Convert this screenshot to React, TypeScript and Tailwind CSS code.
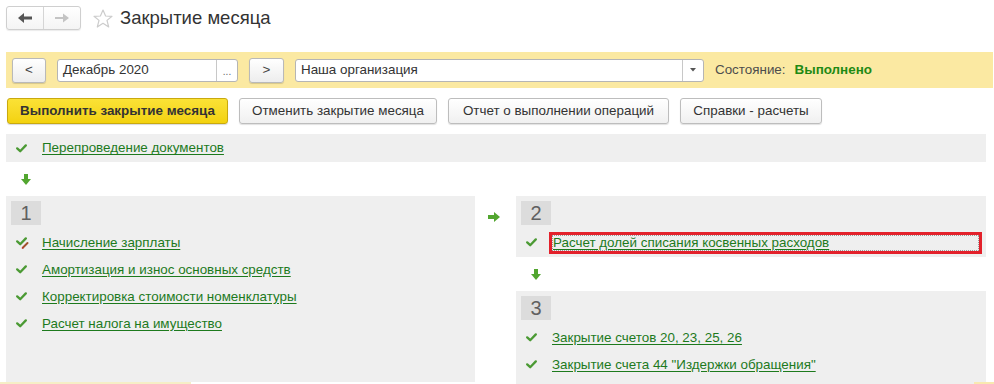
import React from "react";

const LINK = "text-[#1d7a1d] underline underline-offset-[2px] decoration-[#1d7a1d]";
const FS = "text-[13.4px]";

function Check() {
  return (
    <svg width="11" height="9" viewBox="0 0 11 9" className="shrink-0">
      <path d="M1.2 4.4 L4.2 7.2 L9.8 1.4" fill="none" stroke="#4b9a34" strokeWidth="2.3" strokeLinecap="round" strokeLinejoin="round" />
    </svg>
  );
}

function CheckEdit() {
  return (
    <svg width="13" height="12" viewBox="0 0 13 12" className="shrink-0">
      <path d="M1.2 4.4 L4.2 7.2 L9.8 1.4" fill="none" stroke="#4b9a34" strokeWidth="2.3" strokeLinecap="round" strokeLinejoin="round" />
      <path d="M7 10.5 L11.5 6" stroke="#a0522d" strokeWidth="2" strokeLinecap="round" />
      <circle cx="6.6" cy="10.9" r="0.9" fill="#c0392b" />
    </svg>
  );
}

function ArrowDown() {
  return (
    <svg width="10" height="11" viewBox="0 0 10 11">
      <rect x="3" y="0" width="4" height="5.5" fill="#52a62f" />
      <polygon points="0,5 10,5 5,11" fill="#52a62f" />
    </svg>
  );
}

function ArrowRight() {
  return (
    <svg width="12" height="10" viewBox="0 0 12 10">
      <rect x="0" y="3" width="6.5" height="4" fill="#52a62f" />
      <polygon points="6,0 6,10 12,5" fill="#52a62f" />
    </svg>
  );
}

function Item({ text, edit, boxed }: { text: string; edit?: boolean; boxed?: boolean }) {
  return (
    <div className="h-[27px] flex items-center">
      <div className="w-[36px] pl-[10px] flex items-center">{edit ? <CheckEdit /> : <Check />}</div>
      {boxed ? (
        <div className="ml-[-3px] w-[433px] h-[22px] border-[3px] border-[#e3212b] flex items-center">
          <div className="w-full h-full border border-dotted border-[#9a9a9a] flex items-center">
            <span className={`${LINK} ${FS} leading-none`}>{text}</span>
          </div>
        </div>
      ) : (
        <span className={`${LINK} ${FS} leading-none`}>{text}</span>
      )}
    </div>
  );
}

function NumBox({ n }: { n: string }) {
  return (
    <div className="ml-[5px] mt-[5px] w-[30px] h-[24px] bg-[#dcdcdc] flex items-center justify-center text-[20px] text-[#606060] leading-none">
      {n}
    </div>
  );
}

function GrayBtn({ children, w }: { children: React.ReactNode; w: string }) {
  return (
    <div
      className={`${w} h-[26px] flex items-center justify-center rounded-[3px] border border-[#bdbdbd] bg-gradient-to-b from-white to-[#f0f0f0] ${FS} text-[#333] shadow-[0_1px_1px_rgba(0,0,0,0.12)]`}
    >
      {children}
    </div>
  );
}

export default function App() {
  return (
    <div className="relative w-[994px] h-[384px] overflow-hidden bg-white font-['Liberation_Sans',Arial,sans-serif] text-[#333]">
      {/* Header */}
      <div className="flex items-center pt-[6px] pl-[6px] h-[30px]">
        <div className="flex h-[24px] rounded-[3px] border border-[#cfcfcf] shadow-[0_1px_1px_rgba(0,0,0,0.08)] bg-gradient-to-b from-white to-[#f4f4f4]">
          <div className="w-[37px] flex items-center justify-center border-r border-[#d5d5d5]">
            <svg width="14" height="10" viewBox="0 0 14 10">
              <rect x="5" y="3.5" width="9" height="3" fill="#555" />
              <polygon points="0,5 6,0 6,10" fill="#555" />
            </svg>
          </div>
          <div className="w-[36px] flex items-center justify-center">
            <svg width="14" height="10" viewBox="0 0 14 10">
              <rect x="0" y="4" width="9" height="2" fill="#c4c4c4" />
              <polygon points="14,5 8,0.5 8,9.5" fill="#c4c4c4" />
            </svg>
          </div>
        </div>
        <svg width="20" height="19" viewBox="0 0 20 19" className="ml-[12px]">
          <polygon
            points="10,1 12.6,7 19,7.3 14,11.4 15.7,18 10,14.3 4.3,18 6,11.4 1,7.3 7.4,7"
            fill="none"
            stroke="#cccccc"
            strokeWidth="1.2"
            strokeLinejoin="round"
          />
        </svg>
        <div className="ml-[7px] text-[18.5px] text-[#333] leading-none">Закрытие месяца</div>
      </div>

      {/* Yellow toolbar */}
      <div className="mt-[22px] ml-[6px] w-[987px] h-[36px] bg-[#fbe9a2] flex items-center pl-[6px] gap-[11px]">
        <div className={`w-[34px] h-[25px] flex items-center justify-center rounded-[3px] border border-[#b9b9b9] bg-gradient-to-b from-white to-[#ededed] ${FS} text-[#444] shadow-[0_1px_1px_rgba(0,0,0,0.15)]`}>
          &lt;
        </div>
        <div className="w-[181px] h-[23px] flex rounded-[3px] border border-[#b5b5b5] bg-white">
          <div className={`flex-1 flex items-center pl-[5px] ${FS} text-[#333]`}>Декабрь 2020</div>
          <div className="w-[21px] border-l border-[#c8c8c8] flex items-end justify-center pb-[4px] text-[10px] text-[#666] leading-none">...</div>
        </div>
        <div className={`w-[35px] h-[25px] flex items-center justify-center rounded-[3px] border border-[#b9b9b9] bg-gradient-to-b from-white to-[#ededed] ${FS} text-[#444] shadow-[0_1px_1px_rgba(0,0,0,0.15)]`}>
          &gt;
        </div>
        <div className="w-[409px] h-[23px] flex rounded-[3px] border border-[#b5b5b5] bg-white">
          <div className={`flex-1 flex items-center pl-[5px] ${FS} text-[#333]`}>Наша организация</div>
          <div className="w-[21px] border-l border-[#c8c8c8] flex items-center justify-center">
            <svg width="6" height="4" viewBox="0 0 6 4">
              <polygon points="0,0 6,0 3,3.5" fill="#555" />
            </svg>
          </div>
        </div>
        <div className={`flex items-center ${FS}`}>
          <span className="text-[#4d4d4d]">Состояние:</span>
          <span className="ml-[9px] font-bold text-[#1f8a14]">Выполнено</span>
        </div>
      </div>

      {/* Command buttons */}
      <div className="mt-[10px] ml-[7px] flex gap-[11px]">
        <div className={`w-[221px] h-[26px] flex items-center justify-center rounded-[3px] border border-[#c9a90e] bg-gradient-to-b from-[#fbe235] to-[#f3d20c] ${FS} font-bold text-[#333] shadow-[0_1px_1px_rgba(0,0,0,0.15)]`}>
          Выполнить закрытие месяца
        </div>
        <GrayBtn w="w-[198px]">Отменить закрытие месяца</GrayBtn>
        <GrayBtn w="w-[221px]">Отчет о выполнении операций</GrayBtn>
        <GrayBtn w="w-[142px]">Справки - расчеты</GrayBtn>
      </div>

      {/* Reposting band */}
      <div className="mt-[10px] ml-[6px] w-[980px] h-[28px] bg-[#efefef] flex items-center">
        <div className="w-[36px] pl-[10px] flex items-center">
          <Check />
        </div>
        <span className={`${LINK} ${FS} leading-none`}>Перепроведение документов</span>
      </div>

      <div className="h-[34px] pl-[21px] flex items-center">
        <ArrowDown />
      </div>

      {/* Stages */}
      <div className="ml-[6px] flex">
        <div className="w-[469px] h-[186px] bg-[#efefef] flex flex-col">
          <NumBox n="1" />
          <div className="mt-[4px]">
            <Item text="Начисление зарплаты" edit />
            <Item text="Амортизация и износ основных средств" />
            <Item text="Корректировка стоимости номенклатуры" />
            <Item text="Расчет налога на имущество" />
          </div>
        </div>
        <div className="w-[41px] pl-[13px] pt-[16px]">
          <ArrowRight />
        </div>
        <div className="w-[470px] flex flex-col">
          <div className="h-[61px] bg-[#efefef] flex flex-col">
            <NumBox n="2" />
            <div className="mt-[4px]">
              <Item text="Расчет долей списания косвенных расходов" boxed />
            </div>
          </div>
          <div className="h-[34px] pl-[15px] flex items-center">
            <ArrowDown />
          </div>
          <div className="h-[100px] bg-[#efefef] flex flex-col">
            <NumBox n="3" />
            <div className="mt-[4px]">
              <Item text="Закрытие счетов 20, 23, 25, 26" />
              <Item text='Закрытие счета 44 "Издержки обращения"' />
            </div>
          </div>
        </div>
      </div>

      {/* bottom edge fragments */}
      <div className="absolute left-0 bottom-0 w-[191px] h-[2px] bg-[#f6eec6]" />
      <div className="absolute right-0 bottom-0 w-[20px] h-[2px] bg-[#f9e9b0]" />
    </div>
  );
}
